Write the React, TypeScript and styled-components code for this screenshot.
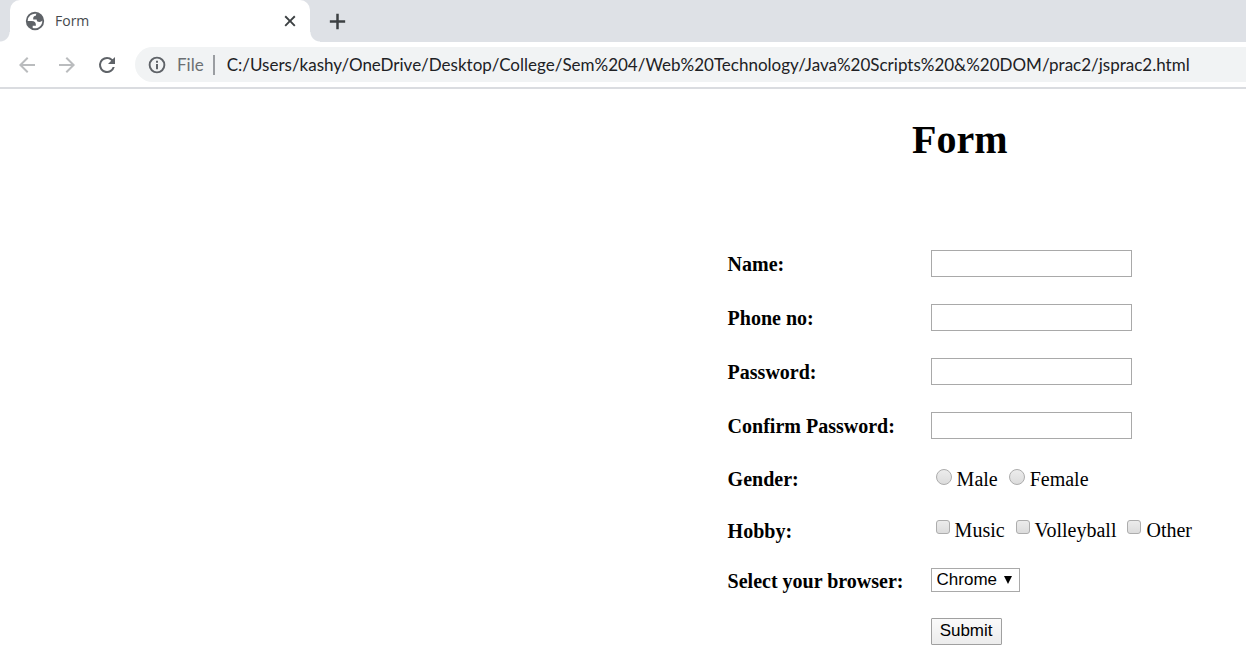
import React from "react";
import styled, { createGlobalStyle } from "styled-components";

const Global = createGlobalStyle`
  * { box-sizing: border-box; }
  body { margin: 0; background: #fff; color: #000; overflow-x: hidden; }
`;

const TabStrip = styled.header`
  display: flex;
  align-items: center;
  height: 42px;
  padding-left: 10px;
  background: #dee1e6;
`;

const Tab = styled.div`
  position: relative;
  display: flex;
  align-items: center;
  gap: 9px;
  width: 300px;
  height: 42px;
  padding: 0 11px 0 14px;
  border-radius: 10px 10px 0 0;
  background: #fff;
  font: 14px/20px "Open Sans", "Noto Sans", sans-serif;
  color: #45494d;

  &::before,
  &::after {
    content: "";
    position: absolute;
    bottom: 0;
    width: 10px;
    height: 10px;
  }
  &::before {
    right: 100%;
    background: radial-gradient(circle at 0 0, transparent 9px, #fff 10px);
  }
  &::after {
    left: 100%;
    background: radial-gradient(circle at 100% 0, transparent 9px, #fff 10px);
  }
`;

const TabTitle = styled.span`
  flex: 1;
`;

const IconButton = styled.button<{ $color?: string }>`
  display: flex;
  flex: none;
  padding: 0;
  border: 0;
  background: none;
  color: ${(p) => p.$color ?? "#3c4043"};
`;

const NewTab = styled(IconButton)`
  margin-left: 16px;
`;

const Toolbar = styled.nav`
  display: flex;
  align-items: center;
  gap: 16px;
  height: 47px;
  padding-left: 15px;
  border-bottom: 2px solid #dadce0;
`;

const AddressBar = styled.div`
  display: flex;
  flex: 1;
  align-items: center;
  min-width: 0;
  height: 35px;
  padding-left: 12px;
  border-radius: 18px 0 0 18px;
  background: #f1f3f4;
  font: 17px/24px Lato, "Open Sans", sans-serif;
  color: #6b6f73;
`;

const Scheme = styled.span`
  margin-left: 10px;
  padding-right: 9px;
`;

const Divider = styled.span`
  width: 2px;
  height: 20px;
  background: #9a9da1;
`;

const Url = styled.input`
  flex: 1;
  min-width: 0;
  margin-left: 12px;
  padding: 0;
  border: 0;
  background: none;
  font: inherit;
  color: #202124;
`;

const Page = styled.main`
  display: flex;
  justify-content: flex-end;
  padding: 28px 54px 10px 8px;
  font: 20px/24px "Liberation Serif", serif;
`;

const Title = styled.h1`
  margin: 0 0 73px;
  font-size: 40px;
  line-height: 46px;
  text-align: center;
`;

const Fields = styled.table`
  border-collapse: collapse;
`;

const Row = styled.tr<{ $height: number }>`
  height: ${(p) => p.$height}px;
`;

const Label = styled.th`
  width: 203px;
  padding: 1px 0 0;
  text-align: left;
  white-space: nowrap;
`;

const Cell = styled.td`
  padding: 0;
`;

const TextInput = styled.input`
  display: block;
  width: 201px;
  height: 27px;
  padding: 1px 4px;
  border: 1px solid #a9a9a9;
  background: #fff;
  font: 16px "Liberation Sans", sans-serif;
`;

const Choices = styled.div`
  display: flex;
  gap: 11px;
  padding-left: 5px;
`;

const Choice = styled.label`
  display: flex;
  gap: 5px;
  white-space: nowrap;
`;

const Mark = styled.input`
  appearance: none;
  flex: none;
  width: ${(p) => (p.type === "radio" ? 16 : 14)}px;
  height: ${(p) => (p.type === "radio" ? 16 : 14)}px;
  margin: 2px 0 0;
  border: 1px solid #adadad;
  border-radius: ${(p) => (p.type === "radio" ? "50%" : "3px")};
  background: linear-gradient(#ececec, #dcdcdc);
  &:checked { background: #555; }
`;

const SelectWrap = styled.div`
  position: relative;
  width: 89px;
`;

const Select = styled.select`
  appearance: none;
  display: block;
  width: 100%;
  height: 24px;
  padding: 0 5px;
  border: 1px solid #a9a9a9;
  border-radius: 0;
  background: #fff;
  color: #000;
  font: 17px/20px "Liberation Sans", sans-serif;
`;

const Arrow = styled.svg`
  position: absolute;
  top: 8px;
  right: 8px;
  pointer-events: none;
`;

const Submit = styled.button`
  display: block;
  width: 71px;
  height: 27px;
  padding: 0 0 2px;
  border: 1px solid #a0a0a0;
  border-radius: 1px;
  background: linear-gradient(#fafafa, #ececec);
  color: #000;
  font: 17px/20px "Liberation Sans", sans-serif;
`;

const Icon = ({ d, size }: { d: string; size: number }) => (
  <svg width={size} height={size} viewBox="0 0 24 24" fill="currentColor" fillRule="evenodd" aria-hidden="true">
    <path d={d} />
  </svg>
);

const icons = {
  globe:
    "M12 2a10 10 0 1 0 0 20 10 10 0 0 0 0-20zM4 12h4.4c3.407.022 4.922 1.73 4.543 5.127H9.488v2.47a8.004 8.004 0 0 0 10.498-8.083C19.327 12.504 18.332 13 17 13c-2.137 0-3.206-.916-3.206-2.75h-3.748c-.274-2.728.683-4.092 2.87-4.092 0-.975.327-1.597.811-1.97A8.004 8.004 0 0 0 4 12z",
  close: "M19.3 6.5 17.5 4.7 12 10.2 6.5 4.7 4.7 6.5l5.5 5.5-5.5 5.5 1.8 1.8 5.5-5.5 5.5 5.5 1.8-1.8-5.5-5.5z",
  plus: "M20 13.3h-6.7V20h-2.6v-6.7H4v-2.6h6.7V4h2.6v6.7H20z",
  back: "M20 11H7.83l5.59-5.59L12 4l-8 8 8 8 1.41-1.41L7.83 13H20v-2z",
  forward: "M12 4l-1.41 1.41L16.17 11H4v2h12.17l-5.58 5.59L12 20l8-8z",
  reload:
    "M17.65 6.35A7.95 7.95 0 0 0 12 4a8 8 0 1 0 7.73 10h-2.08A6 6 0 1 1 12 6c1.66 0 3.14.69 4.22 1.78L13 11h7V4l-2.35 2.35z",
  info: "M10.8 17.2h2.4v-6.4h-2.4v6.4zM12 2a10 10 0 1 0 0 20 10 10 0 0 0 0-20zm0 17.7a7.7 7.7 0 1 1 0-15.4 7.7 7.7 0 0 1 0 15.4zM10.8 9.2h2.4V6.8h-2.4v2.4z",
};

const textFields = [
  { id: "name", label: "Name:", type: "text" },
  { id: "phone", label: "Phone no:", type: "text" },
  { id: "password", label: "Password:", type: "password" },
  { id: "confirm", label: "Confirm Password:", type: "password" },
];

export default function App() {
  return (
    <>
      <Global />
      <TabStrip>
        <Tab>
          <IconButton as="span" $color="#5f6368">
            <Icon d={icons.globe} size={22} />
          </IconButton>
          <TabTitle>Form</TabTitle>
          <IconButton aria-label="Close tab">
            <Icon d={icons.close} size={18} />
          </IconButton>
        </Tab>
        <NewTab aria-label="New tab">
          <Icon d={icons.plus} size={23} />
        </NewTab>
      </TabStrip>
      <Toolbar>
        <IconButton aria-label="Back" $color="#babcbe">
          <Icon d={icons.back} size={24} />
        </IconButton>
        <IconButton aria-label="Forward" $color="#babcbe">
          <Icon d={icons.forward} size={24} />
        </IconButton>
        <IconButton aria-label="Reload" $color="#5f6368">
          <Icon d={icons.reload} size={24} />
        </IconButton>
        <AddressBar>
          <IconButton aria-label="Site information" $color="#5f6368">
            <Icon d={icons.info} size={20} />
          </IconButton>
          <Scheme>File</Scheme>
          <Divider />
          <Url
            aria-label="Address"
            defaultValue="C:/Users/kashy/OneDrive/Desktop/College/Sem%204/Web%20Technology/Java%20Scripts%20&%20DOM/prac2/jsprac2.html"
          />
        </AddressBar>
      </Toolbar>
      <Page>
        <form onSubmit={(e) => e.preventDefault()}>
          <Title>Form</Title>
          <Fields>
            <tbody>
              {textFields.map((f) => (
                <Row key={f.id} $height={54}>
                  <Label scope="row">
                    <label htmlFor={f.id}>{f.label}</label>
                  </Label>
                  <Cell>
                    <TextInput id={f.id} type={f.type} />
                  </Cell>
                </Row>
              ))}
              <Row $height={53}>
                <Label scope="row" id="gender">Gender:</Label>
                <Cell>
                  <Choices role="radiogroup" aria-labelledby="gender">
                    {["Male", "Female"].map((name) => (
                      <Choice key={name}>
                        <Mark type="radio" name="gender" value={name} />
                        {name}
                      </Choice>
                    ))}
                  </Choices>
                </Cell>
              </Row>
              <Row $height={50}>
                <Label scope="row" id="hobby">Hobby:</Label>
                <Cell>
                  <Choices role="group" aria-labelledby="hobby">
                    {["Music", "Volleyball", "Other"].map((name) => (
                      <Choice key={name}>
                        <Mark type="checkbox" name="hobby" value={name} />
                        {name}
                      </Choice>
                    ))}
                  </Choices>
                </Cell>
              </Row>
              <Row $height={50}>
                <Label scope="row">
                  <label htmlFor="browser">Select your browser:</label>
                </Label>
                <Cell>
                  <SelectWrap>
                    <Select id="browser">
                      <option>Chrome</option>
                    </Select>
                    <Arrow width="8" height="8" viewBox="0 0 8 8" aria-hidden="true">
                      <path d="M0 0h8L4 8z" />
                    </Arrow>
                  </SelectWrap>
                </Cell>
              </Row>
              <Row $height={53}>
                <Cell />
                <Cell>
                  <Submit type="submit">Submit</Submit>
                </Cell>
              </Row>
            </tbody>
          </Fields>
        </form>
      </Page>
    </>
  );
}
